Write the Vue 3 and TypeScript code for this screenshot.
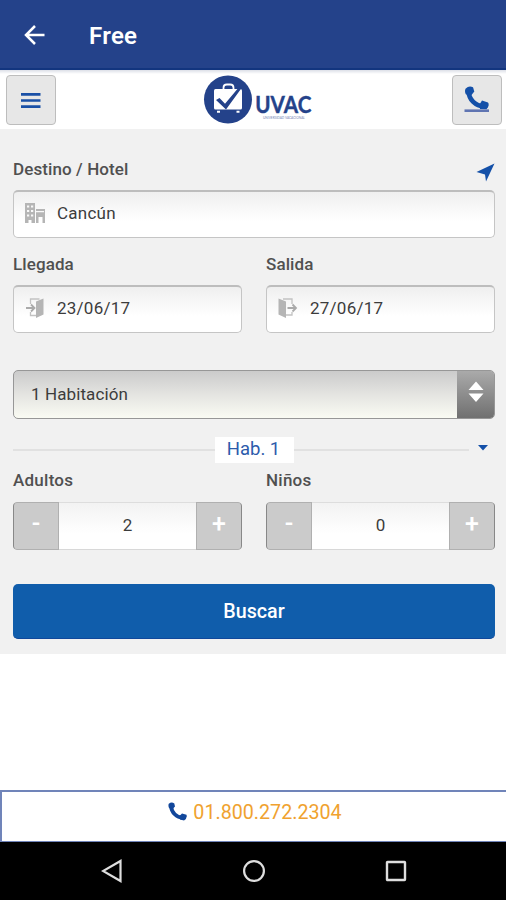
<script setup lang="ts">
import { ref } from 'vue'

interface Counter { label: string; value: number; min: number }

const destination = ref('Cancún')
const arrival = ref('23/06/17')
const departure = ref('27/06/17')
const counters = ref<Counter[]>([
  { label: 'Adultos', value: 2, min: 1 },
  { label: 'Niños', value: 0, min: 0 },
])

function step(c: Counter, by: number): void {
  c.value = Math.max(c.min, c.value + by)
}
</script>

<template>
  <div class="screen">
    <header class="appbar">
      <svg class="back" width="22" height="22" viewBox="0 0 22 22">
        <path d="M20.500 11H2.500M11 2L2 11l9 9" fill="none" stroke="#fff" stroke-width="2.500" />
      </svg>
      <h1>Free</h1>
    </header>

    <div class="brandbar">
      <button class="square" type="button">
        <svg width="20" height="17" viewBox="0 0 20 17">
          <path d="M0 2.300h19.500M0 8.500h19.500M0 14.700h19.500" stroke="#1a50a6" stroke-width="2.700" />
        </svg>
      </button>
      <svg class="logo" width="112" height="50" viewBox="0 0 112 50">
        <circle cx="25" cy="24.500" r="24" fill="#24428a" />
        <path d="M20.500 14v-1.200q0-3.300 3.300-3.300h3.400q3.300 0 3.300 3.300V14" fill="none" stroke="#fff" stroke-width="1.800" />
        <rect x="11" y="14" width="28" height="20.500" rx="1.500" fill="#fff" />
        <path d="M14 35.700h3v2h-3zM33.500 35.700h3v2h-3z" fill="#fff" />
        <path d="M13 25l3.500-2 5.500 5.700L36.500 11.500l2.500 1L23 34.500z" fill="#24428a" />
        <text x="52.300" y="37.500" class="word" textLength="56" lengthAdjust="spacingAndGlyphs">UVAC</text>
        <text x="60" y="43.800" class="tag" textLength="42" lengthAdjust="spacingAndGlyphs">UNIVERSIDAD VACACIONAL</text>
      </svg>
      <button class="square" type="button">
        <svg width="26" height="28" viewBox="0 0 26 28">
          <path d="M4.500 5C5 14 11.500 20 20 20.500" fill="none" stroke="#1450a8" stroke-width="4.600" />
          <path d="M1.500 2.700Q5-1 9 1.200L10.300 5.500 7.500 9 2 8.500Q.3 6 1.500 2.700z" fill="#1450a8" />
          <path d="M15.500 18.500L18 14.500l6 2Q26 19 22.500 23.300L16 23z" fill="#1450a8" />
          <path d="M.5 24.700h24.500" stroke="#6075b2" stroke-width="2.600" />
        </svg>
      </button>
    </div>

    <main class="form">
      <div class="label-row">
        <label>Destino / Hotel</label>
        <svg class="locate" width="19" height="19" viewBox="0 0 19 19">
          <path d="M18.500.5L10 18.500 9 11.500.5 9z" fill="#1450a8" />
        </svg>
      </div>
      <div class="field">
        <svg width="20" height="20" viewBox="0 0 20 20">
          <path d="M0 0h10v20H6.500v-3h-3v3H0zM11 6h9v14h-2.500v-6h-4v6H11z" fill="#b5b5b5" />
          <path d="M2 2.500h2.200v2H2zM6 2.500h2.200v2H6zM2 7h2.200v2H2zM6 7h2.200v2H6zM2 11.500h2.200v2H2zM6 11.500h2.200v2H6zM11 8h8v1.300h-8z" fill="#f8f8f8" />
        </svg>
        <span>{{ destination }}</span>
      </div>

      <div class="pair dates">
        <div>
          <label>Llegada</label>
          <div class="field">
            <svg width="20" height="20" viewBox="0 0 20 20">
              <path d="M5.500 6V1h9M5.500 14v3.500H11" fill="none" stroke="#c2c2c2" stroke-width="1.300" />
              <path d="M1 10h8M6 6.500L9.500 10 6 13.500" fill="none" stroke="#aaa" stroke-width="1.800" />
              <path d="M11 3.500L18.500.5v16L11 20z" fill="#b5b5b5" />
            </svg>
            <span>{{ arrival }}</span>
          </div>
        </div>
        <div>
          <label>Salida</label>
          <div class="field">
            <svg width="20" height="20" viewBox="0 0 20 20">
              <path d="M5 1h9v5M14 14v3H8" fill="none" stroke="#c2c2c2" stroke-width="1.300" />
              <path d="M9.500 10H18M14.500 6.500L18 10l-3.500 3.500" fill="none" stroke="#aaa" stroke-width="1.800" />
              <path d="M.5.500L8 3.500V20L.5 16.500z" fill="#b5b5b5" />
            </svg>
            <span>{{ departure }}</span>
          </div>
        </div>
      </div>

      <div class="select">
        <span>1 Habitación</span>
        <div class="arrows">
          <svg width="16" height="22" viewBox="0 0 16 22">
            <path d="M8 .5l7.500 8.500H.5zM.5 12.500h15L8 21z" fill="#fff" />
          </svg>
        </div>
      </div>

      <div class="room">
        <i class="rule"></i>
        <span>Hab. 1</span>
        <i class="rule"></i>
        <svg width="10" height="6" viewBox="0 0 10 6"><path d="M0 0h10L5 5.500z" fill="#1450a8" /></svg>
      </div>

      <div class="pair">
        <div v-for="c in counters" :key="c.label">
          <label>{{ c.label }}</label>
          <div class="stepper">
            <button type="button" @click="step(c, -1)">-</button>
            <output>{{ c.value }}</output>
            <button type="button" @click="step(c, 1)">+</button>
          </div>
        </div>
      </div>

      <button class="submit" type="button">Buscar</button>
    </main>

    <div class="callbar">
      <svg width="19" height="19" viewBox="0 0 19 19">
        <path d="M3 4C3.500 10.500 8.500 15.500 15 16" fill="none" stroke="#12479b" stroke-width="3.800" />
        <path d="M.8 1.800Q3.500-.5 6.300 1.500L7 4.500 4.500 7 1 6Q0 3.500.8 1.800z" fill="#12479b" />
        <path d="M11.500 14L14 11.500l4.500 1.200Q19.500 16 16 18.500L12 17.500z" fill="#12479b" />
      </svg>
      <span>01.800.272.2304</span>
    </div>

    <nav class="sysnav">
      <svg width="22" height="24" viewBox="0 0 22 24"><path d="M19.500 2v20L2 12z" fill="none" stroke="#dedede" stroke-width="2.200" /></svg>
      <svg width="22" height="24" viewBox="0 0 22 24"><circle cx="11" cy="12" r="9.900" fill="none" stroke="#dedede" stroke-width="2.200" /></svg>
      <svg width="22" height="24" viewBox="0 0 22 24"><rect x="2" y="3" width="18" height="18" rx=".5" fill="none" stroke="#dedede" stroke-width="2.400" /></svg>
    </nav>
  </div>
</template>

<style>
body { margin: 0; background: #fff; }
</style>

<style scoped>
* { box-sizing: border-box; }
svg { display: block; flex: none; }
button { font-family: inherit; padding: 0; }
.screen {
  width: 506px; height: 900px; display: flex; flex-direction: column;
  font-family: Roboto, "Liberation Sans", sans-serif; color: #3c3c3c; overflow: hidden;
}
.appbar {
  height: 70px; flex: none; display: flex; align-items: center; padding: 0 24px;
  background: #24428a; border-bottom: 2px solid #12357f;
}
.back { margin-top: 1px; }
h1 { margin: 3px 0 0 43px; font-size: 24px; line-height: 28px; font-weight: 600; letter-spacing: .3px; color: #fff; }
.brandbar {
  height: 59px; flex: none; display: flex; align-items: center; justify-content: space-between;
  padding: 1px 4px 0 6px; background: linear-gradient(#dcdfe7, #fff 4px);
}
.square {
  width: 50px; height: 50px; display: flex; align-items: center; justify-content: center;
  background: #e7e7e7; border: 1px solid #bdbdbd; border-radius: 4px;
}
.logo { margin-left: 10px; }
.word { font: 700 22px Lato, sans-serif; fill: #24428a; stroke: #24428a; stroke-width: .4px; }
.tag { font: 400 4px Lato, sans-serif; fill: #7485b4; }
.form { height: 525px; flex: none; padding: 29px 11px 0 13px; background: #f1f1f1; }
label { display: block; font-size: 17px; line-height: 22px; font-weight: 500; letter-spacing: .1px; color: #505050; }
.label-row { display: flex; justify-content: space-between; height: 32px; }
.locate { margin-top: 5px; }
.field {
  height: 48px; display: flex; align-items: center; gap: 12px; padding: 0 11px 3px;
  border: 1px solid #c5c5c5; border-top: 2px solid #bdbdbd; border-radius: 5px;
  background: linear-gradient(#efefef, #fff 65%); font-size: 17px; letter-spacing: .25px;
}
.pair { display: grid; grid-template-columns: 229px 229px; column-gap: 24px; }
.dates { margin-top: 15px; }
.dates .field { margin-top: 10px; }
.select {
  height: 49px; margin-top: 37px; display: flex; align-items: stretch; overflow: hidden;
  border: 1px solid #979797; border-radius: 5px;
  background: linear-gradient(#cbcbcb, #e4e4e1 50%, #fafbf3); font-size: 17px; letter-spacing: .1px;
}
.select span { flex: 1; padding-left: 17px; line-height: 46px; }
.arrows {
  width: 37px; display: flex; align-items: center; justify-content: center; padding-bottom: 5px;
  background: linear-gradient(#aaa, #707070);
}
.room { height: 26px; margin-top: 18px; display: flex; align-items: center; }
.room span {
  width: 79px; height: 26px; background: #fff; color: #2c5bab; text-align: center;
  font-size: 18.500px; line-height: 25px; padding-right: 2px;
}
.rule { height: 2px; margin-top: -1px; background: #e1e1e1; width: 202px; }
.rule + span + .rule { width: 175px; margin-right: 9px; }
.room svg { margin-top: -4px; }
.room + .pair { margin-top: 6px; }
.room + .pair label { letter-spacing: .25px; }
.stepper {
  margin-top: 11px; height: 48px; display: flex; overflow: hidden;
  border-radius: 4px; background: linear-gradient(#f2f2f2, #fff 65%);
}
.stepper button {
  width: 46px; padding-bottom: 5px; background: #cbcbcb; border: 1px solid #b0b0b0; color: #fff;
  font-size: 25px; line-height: 36px; font-weight: 500;
}
.stepper button:first-child { border-left-color: #888; border-radius: 4px 0 0 4px; }
.stepper button:last-child { border-right-color: #888; border-radius: 0 4px 4px 0; }
.stepper output {
  flex: 1; text-align: center; font-size: 17px; line-height: 45px;
  border-top: 1px solid #ddd; border-bottom: 1px solid #d8d8d8;
}
.submit {
  display: block; width: 482px; height: 55px; margin-top: 34px; border: 0; border-bottom: 1px solid #10489b;
  border-radius: 5px; background: #105dab; color: #fff; font-size: 19.700px; font-weight: 500;
}
.callbar {
  height: 52px; margin-top: auto; flex: none; display: flex; justify-content: center; gap: 6px;
  padding: 10px 0 0 2px; border: solid #7084b9; border-width: 2px 0 1px 2px;
  font-size: 19.700px; line-height: 22px; color: #f0a22f;
}
.sysnav {
  height: 58px; flex: none; display: flex; justify-content: center; gap: 120px;
  padding: 17px 0 0 2px; background: #000;
}
</style>
